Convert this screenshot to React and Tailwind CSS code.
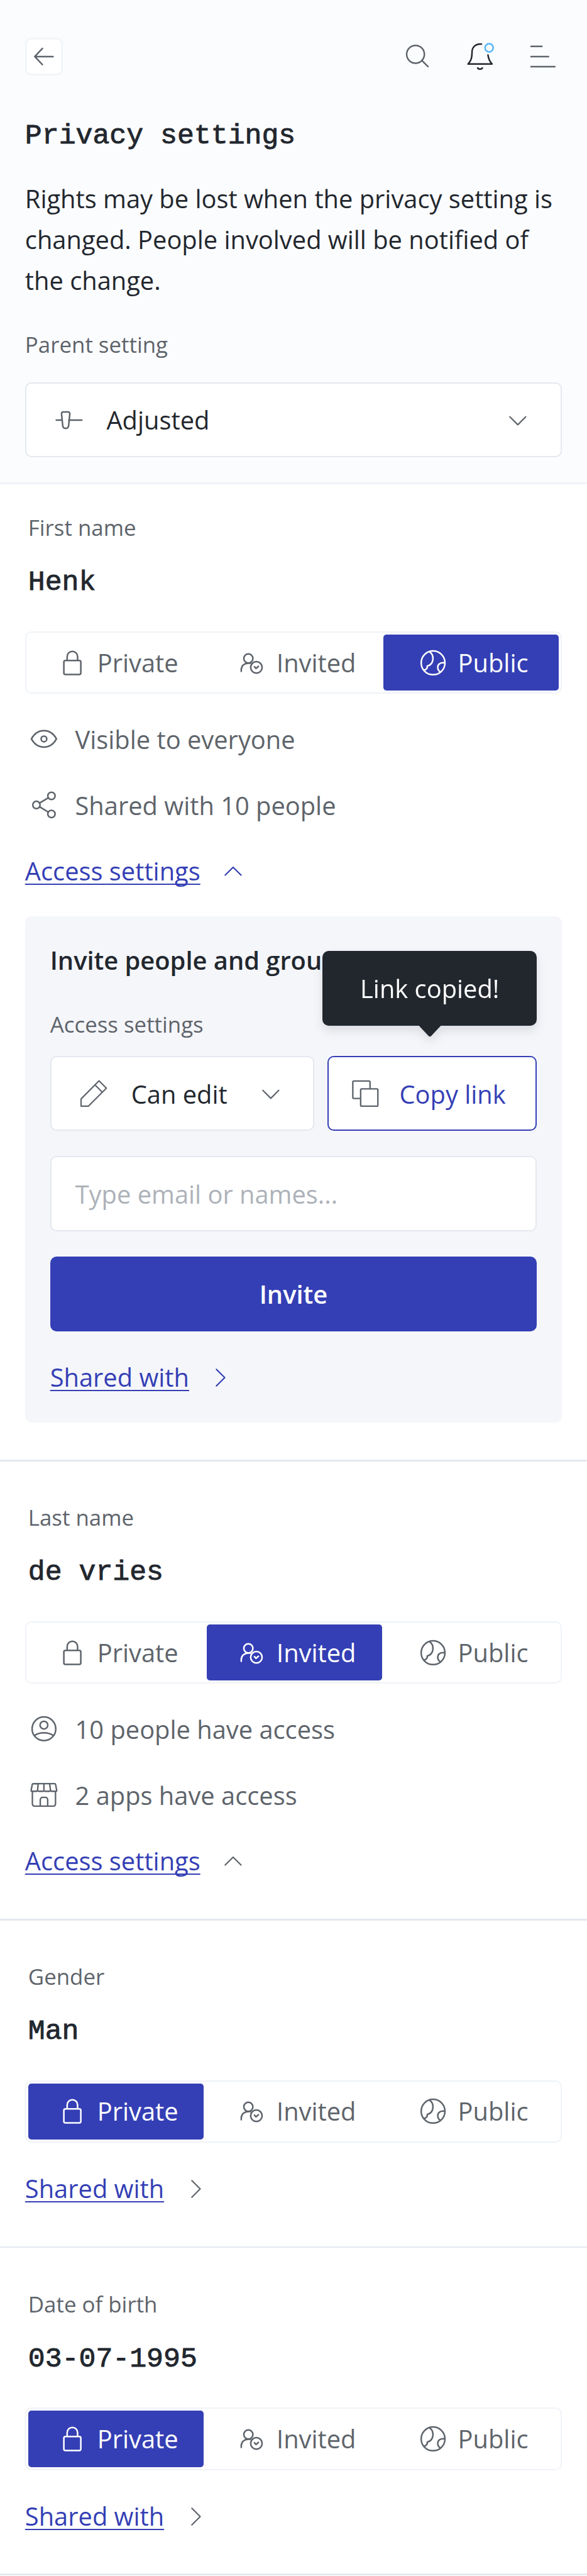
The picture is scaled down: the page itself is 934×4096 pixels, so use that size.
import React from 'react';

/* Icons share a 72-unit grid. */
function Icon({ children, className = '', width = 3 }) {
  return (
    <svg
      viewBox="0 0 72 72"
      fill="none"
      stroke="currentColor"
      strokeWidth={width}
      strokeLinecap="round"
      strokeLinejoin="round"
      className={`size-[59.8px] shrink-0 ${className}`}
    >
      {children}
    </svg>
  );
}

const BackIcon = () => (
  <Icon className="text-[#5e646b]">
    <path d="M53.5 36H18.5M33 20.5 18.5 36 33 51.5" />
  </Icon>
);
const SearchIcon = () => (
  <Icon className="text-[#5e646b]">
    <circle cx="32.7" cy="31.7" r="17" />
    <path d="M45 43.7 56.7 55.3" />
  </Icon>
);
const BellIcon = () => (
  <Icon className="text-[#22272e]">
    <path d="M38.7 12.2C28.5 11 20.8 17.5 20.6 26.5 20.4 37 19.5 43.5 12.9 50.4H58.9C54.5 45.5 52 40.5 51.1 33" />
    <path d="M31.3 57.8C33.3 61 38.3 61 40.4 57.8" />
    <circle cx="53.3" cy="19.3" r="7.8" stroke="#55b5fb" />
  </Icon>
);
const MenuIcon = () => (
  <Icon className="text-[#5e646b]">
    <path d="M13.2 16.6H34M13.2 36H46.6M13.2 55.4H58.8" />
  </Icon>
);
const SliderIcon = () => (
  <Icon className="text-[#5e646b]">
    <path d="M11.5 36H22.5M35.5 36H60.5" />
    <path d="M25 20.5H34C36.3 20.5 37.6 22 37.4 24.2L35.2 46.5C34.8 50.5 33 52 29.5 52S24.2 50.5 23.8 46.5L21.6 24.2C21.4 22 22.7 20.5 25 20.5Z" />
  </Icon>
);
const ChevronDown = () => (
  <Icon className="text-[#5e646b]" width={2.6}>
    <path d="M20.8 29.8 36 45 51.2 29.8" />
  </Icon>
);
const ChevronUp = ({ className }) => (
  <Icon className={className} width={2.6}>
    <path d="M20.8 45.2 36 30 51.2 45.2" />
  </Icon>
);
const ChevronRight = ({ className }) => (
  <Icon className={className} width={2.6}>
    <path d="M28 22 44 38 28 54" />
  </Icon>
);
const LockIcon = () => (
  <Icon>
    <rect x="20" y="31.5" width="32.5" height="26.8" rx="3" />
    <path d="M26.3 31V24.2a10 10 0 0 1 20 0V31" />
  </Icon>
);
const InvitedIcon = () => (
  <Icon>
    <circle cx="30.3" cy="27.8" r="8.7" />
    <path d="M16.7 52.5V49.5C16.7 42 22.5 36.6 30.3 36.6H34.5" />
    <circle cx="45.7" cy="44.8" r="11" />
    <path d="M42 43.6 45 46.8 49.6 42.8" />
  </Icon>
);
const GlobeIcon = () => (
  <Icon>
    <circle cx="36.2" cy="36" r="22.8" />
    <path d="M29.6 15C34 18 36.3 22.5 36 28.5 35.7 36 31.5 40.8 25 42.3 26 46 22.5 49.5 18.8 50" />
    <path d="M58 36.2C50.5 34.8 45.2 38.8 45.2 44.5 45.2 48.5 47 51.5 50.2 53.5" />
  </Icon>
);
const EyeIcon = () => (
  <Icon>
    <path d="M12 36C17.5 26 25.5 20.3 36 20.3S54.5 26 60 36C54.5 46 46.5 51.7 36 51.7S17.5 46 12 36Z" />
    <circle cx="36" cy="36" r="5.4" />
  </Icon>
);
const ShareIcon = () => (
  <Icon>
    <circle cx="50.4" cy="18.7" r="7" />
    <circle cx="21.6" cy="36" r="7" />
    <circle cx="50.4" cy="53.3" r="7" />
    <path d="M27.7 32.4 44.3 22.4M27.7 39.6 44.3 49.6" />
  </Icon>
);
const PersonIcon = () => (
  <Icon>
    <circle cx="36" cy="36" r="22.7" />
    <circle cx="36" cy="29" r="7.4" />
    <path d="M18 48.8C28 41.9 44 41.9 54 48.8" />
  </Icon>
);
const StoreIcon = () => (
  <Icon width={2.8}>
    <path d="M15.6 14.5H56.4C57.6 14.5 58.2 15.1 58.4 16.2L60.5 27.6C60.6 28.6 60 29.2 59.2 29.2H51C49.6 29.2 48.8 28.6 48.6 27.2L47 15M25 15 23.8 27.2C23.6 28.6 22.6 29.2 21.2 29.2H12.8C12 29.2 11.4 28.6 11.5 27.6L13.6 16.2C13.8 15.1 14.4 14.5 15.6 14.5Z" />
    <path d="M36 15V27.5C36 28.7 35 29.2 33.8 29.2H26.5C25 29.2 24 28.6 23.8 27.5M36 27.5C36 28.7 37 29.2 38.2 29.2H46C47.5 29.2 48.5 28.6 48.6 27.5" />
    <path d="M13.9 29.5V53C13.9 56 15.6 57.7 18.6 57.7H53.5C56.5 57.7 58.2 56 58.2 53V29.5" />
    <path d="M29 57.5V46C29 42.6 31 40.7 34 40.7H38.2C41.2 40.7 43.2 42.6 43.2 46V57.5" />
  </Icon>
);
const PencilIcon = () => (
  <Icon className="text-[#5e646b]" width={2.6}>
    <path d="M46.5 11.5 60.5 25.6 26.2 60H12V46.2ZM39 19.5 52.8 33.3" />
  </Icon>
);
const CopyIcon = () => (
  <Icon className="text-[#5e646b]" width={2.8}>
    <path d="M27.5 45.2H14.5C13.3 45.2 12.5 44.4 12.5 43.2V13.8C12.5 12.6 13.3 11.8 14.5 11.8H43.5C44.7 11.8 45.5 12.6 45.5 13.8V26.5" />
    <rect x="27.5" y="27" width="33" height="33" rx="2" />
  </Icon>
);

const LABEL = "font-['Open_Sans',sans-serif] text-[34.87px] leading-[49.8px] text-[#5e646b]";
const MONO =
  "font-['Liberation_Mono',monospace] text-[44.83px] leading-[59.8px] font-normal whitespace-pre text-[#22272e] [-webkit-text-stroke:0.9px_#22272e]";
const LINK =
  'text-[#343fb5] underline decoration-[2.4px] underline-offset-[4.5px] [text-decoration-skip-ink:none]';

const OPTIONS = [
  { name: 'Private', Glyph: LockIcon, offset: '' },
  { name: 'Invited', Glyph: InvitedIcon, offset: 'ml-[5px]' },
  { name: 'Public', Glyph: GlobeIcon, offset: 'ml-auto' },
];

function Tabs({ active }) {
  return (
    <div className="mx-[39.85px] mt-[46.85px] flex h-[99.6px] rounded-[10px] border-2 border-[#eff3f7] p-[3px]">
      {OPTIONS.map(({ name, Glyph, offset }) => (
        <div
          key={name}
          className={`flex w-[279px] items-center justify-center gap-[10px] rounded-[5px] ${offset} ${
            name === active ? 'bg-[#343fb5] text-white' : 'text-[#5e646b]'
          }`}
        >
          <Glyph />
          <span>{name}</span>
        </div>
      ))}
    </div>
  );
}

function LinkRow({ children, up, arrow = 'text-[#5e646b]' }) {
  return (
    <div className={`flex h-[59.8px] items-center ${up ? 'gap-[22.5px]' : 'gap-[20.5px]'}`}>
      <a className={`${LINK} pt-[2px]`}>{children}</a>
      {up ? <ChevronUp className={arrow} /> : <ChevronRight className={arrow} />}
    </div>
  );
}

function InfoRow({ Glyph, children }) {
  return (
    <div className="flex h-[59.8px] items-center gap-[19.9px] text-[#5e646b]">
      <Glyph />
      <span className="pt-[2px]">{children}</span>
    </div>
  );
}

function Section({ label, value, active, top = 'pt-[64.6px]', children, footer }) {
  return (
    <section>
      <div className={`${top} pl-[44.8px]`}>
        <div className={LABEL}>{label}</div>
        <div className={`${MONO} mt-[33px]`}>{value}</div>
      </div>
      <Tabs active={active} />
      <div className="mt-[41.85px] flex flex-col gap-[44.8px] px-[39.85px]">{children}</div>
      {footer}
      <div className={footer ? 'h-[59.8px]' : 'h-[62.8px]'} />
      <div className="h-[2.5px] bg-[#e4e9ee]" />
    </section>
  );
}

function InvitePanel() {
  return (
    <div className="mx-[39.85px] mt-[42.9px] rounded-[10px] bg-[#f5f6fa] px-[39.85px] pt-[40.4px] pb-[42.8px]">
      <h2 className="leading-[59.8px] font-semibold whitespace-nowrap text-[#22272e]">
        Invite people and groups
      </h2>
      <div className={`${LABEL} mt-[46.7px]`}>Access settings</div>
      <div className="mt-[25px] flex gap-[20.6px]">
        <div className="flex h-[119.6px] w-[420.5px] items-center rounded-[10px] border-2 border-[#e4e8ef] bg-white px-[37.4px]">
          <PencilIcon />
          <span className="ml-[29.9px] flex-1 pt-[2px] text-[#22272e]">Can edit</span>
          <ChevronDown />
        </div>
        <div className="relative flex h-[119.6px] flex-1 items-center rounded-[10px] border-2 border-[#343fb5] bg-white pl-[27.9px]">
          <CopyIcon />
          <span className="ml-[25px] pt-[2px] whitespace-nowrap text-[#343fb5]">Copy link</span>
          <div className="absolute -right-[2px] bottom-[164.9px] flex h-[119.6px] w-[341.2px] items-center justify-center rounded-[10px] bg-[#22272e] text-white drop-shadow-[0_8px_8px_rgba(34,39,46,0.12)]">
            Link copied!
            <svg viewBox="0 0 42 21" className="absolute top-full left-1/2 h-[17.4px] w-[34.9px] -translate-x-1/2">
              <path d="M0 0H42L23.5 19.5Q21 22 18.5 19.5Z" fill="#22272e" />
            </svg>
          </div>
        </div>
      </div>
      <div className="mt-[39.85px] flex h-[119.6px] items-center rounded-[10px] border-2 border-[#e4e8ef] bg-white pt-[2px] pl-[38px] text-[#adb2b9]">
        Type email or names...
      </div>
      <div className="mt-[39.85px] mb-[41.8px] flex h-[119.6px] items-center justify-center rounded-[10px] bg-[#343fb5] pt-[2px] font-semibold text-white">
        Invite
      </div>
      <LinkRow arrow="text-[#343fb5]">Shared with</LinkRow>
    </div>
  );
}

export default function App() {
  return (
    <main className="h-[4096px] w-[934px] overflow-hidden bg-white font-['Open_Sans',sans-serif] text-[39.85px] leading-[59.8px]">
      <header className="bg-[#fbfcfe] px-[39.85px] pt-[59.8px] pb-[39.9px]">
        <div className="flex items-center justify-between">
          <div className="flex size-[59.8px] items-center justify-center rounded-[10px] bg-white shadow-[inset_0_0_0_2.5px_#f0f3f7]">
            <BackIcon />
          </div>
          <div className="flex gap-[40.3px]">
            <SearchIcon />
            <BellIcon />
            <MenuIcon />
          </div>
        </div>
        <h1 className={`${MONO} mt-[67.2px]`}>Privacy settings</h1>
        <p className="mt-[37.9px] leading-[64.76px] text-[#22272e]">
          Rights may be lost when the privacy setting is
          <br />
          changed. People involved will be notified of
          <br />
          the change.
        </p>
        <div className={`${LABEL} mt-[44.3px]`}>Parent setting</div>
        <div className="mt-[34.8px] flex h-[119.6px] items-center rounded-[10px] border-2 border-[#e4e8ef] bg-white px-[37.9px]">
          <SliderIcon />
          <span className="ml-[29.9px] flex-1 text-[#22272e]">Adjusted</span>
          <ChevronDown />
        </div>
      </header>
      <div className="h-[2.5px] bg-[#eff3f7]" />

      <Section
        label="First name"
        value="Henk"
        active="Public"
        top="pt-[44.6px]"
        footer={<InvitePanel />}
      >
        <InfoRow Glyph={EyeIcon}>Visible to everyone</InfoRow>
        <InfoRow Glyph={ShareIcon}>Shared with 10 people</InfoRow>
        <LinkRow up arrow="text-[#343fb5]">
          Access settings
        </LinkRow>
      </Section>

      <Section label="Last name" value="de vries" active="Invited">
        <InfoRow Glyph={PersonIcon}>10 people have access</InfoRow>
        <InfoRow Glyph={StoreIcon}>2 apps have access</InfoRow>
        <LinkRow up>Access settings</LinkRow>
      </Section>

      <Section label="Gender" value="Man" active="Private">
        <LinkRow>Shared with</LinkRow>
      </Section>

      <Section label="Date of birth" value="03-07-1995" active="Private">
        <LinkRow>Shared with</LinkRow>
      </Section>
    </main>
  );
}
